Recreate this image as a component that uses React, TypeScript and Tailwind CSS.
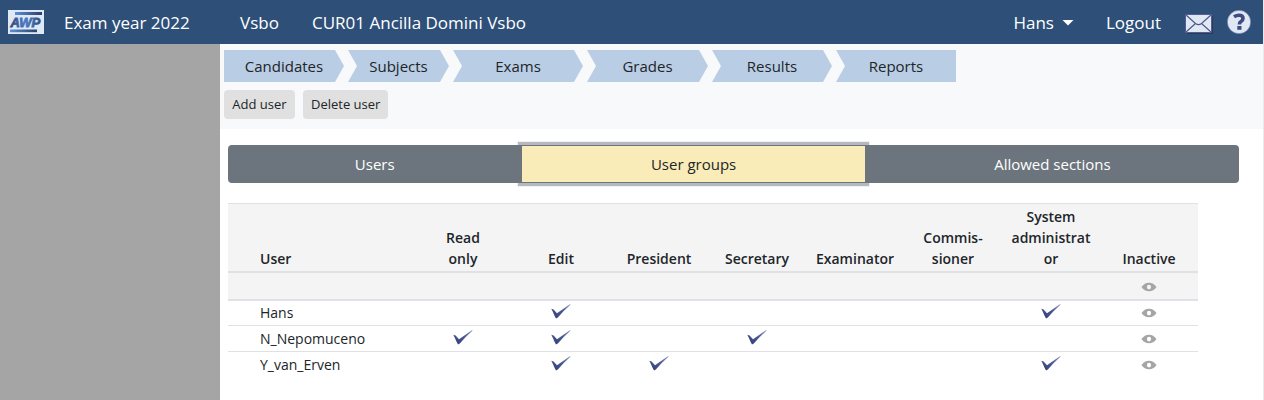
import React from "react";

const steps = [
  { label: "Candidates", size: "w-[120px] [clip-path:polygon(0_0,calc(100%_-_9px)_0,100%_50%,calc(100%_-_9px)_100%,0_100%)]" },
  { label: "Subjects", size: "w-[101px] [clip-path:polygon(0_0,calc(100%_-_9px)_0,100%_50%,calc(100%_-_9px)_100%,0_100%,9px_50%)]" },
  { label: "Exams", size: "w-[130px] [clip-path:polygon(0_0,calc(100%_-_9px)_0,100%_50%,calc(100%_-_9px)_100%,0_100%,9px_50%)]" },
  { label: "Grades", size: "w-[121px] [clip-path:polygon(0_0,calc(100%_-_9px)_0,100%_50%,calc(100%_-_9px)_100%,0_100%,9px_50%)]" },
  { label: "Results", size: "w-[120px] [clip-path:polygon(0_0,calc(100%_-_9px)_0,100%_50%,calc(100%_-_9px)_100%,0_100%,9px_50%)]" },
  { label: "Reports", size: "w-[120px] [clip-path:polygon(0_0,100%_0,100%_100%,0_100%,9px_50%)]" },
];

const groups: { name: string; lines: string[] }[] = [
  { name: "read", lines: ["Read", "only"] },
  { name: "edit", lines: ["Edit"] },
  { name: "president", lines: ["President"] },
  { name: "secretary", lines: ["Secretary"] },
  { name: "examinator", lines: ["Examinator"] },
  { name: "commissioner", lines: ["Commis-", "sioner"] },
  { name: "admin", lines: ["System", "administrat", "or"] },
];

const users = [
  { name: "Hans", member: ["edit", "admin"] },
  { name: "N_Nepomuceno", member: ["read", "edit", "secretary"] },
  { name: "Y_van_Erven", member: ["edit", "president", "admin"] },
];

function Logo() {
  return (
    <svg width="36" height="24" viewBox="0 0 36 24" aria-label="AWP" className="block shrink-0">
      <defs>
        <linearGradient id="bar" x1="0" x2="1">
          <stop offset="0" stopColor="#5b8fd6" />
          <stop offset="1" stopColor="#2b4069" />
        </linearGradient>
        <linearGradient id="letters" x1="0" x2="1">
          <stop offset="0" stopColor="#2c4473" />
          <stop offset="0.500" stopColor="#4a7cc6" />
          <stop offset="1" stopColor="#34507f" />
        </linearGradient>
      </defs>
      <rect width="36" height="24" fill="#dfe8f5" />
      <rect x="7" y="2" width="27" height="3" fill="url(#bar)" />
      <rect x="2" y="19.5" width="27" height="2.7" fill="url(#bar)" />
      <text
        x="2.5"
        y="17"
        fontFamily="Liberation Sans, sans-serif"
        fontSize="13"
        fontWeight="700"
        fontStyle="italic"
        fill="url(#letters)"
        stroke="url(#letters)"
        strokeWidth="0.800"
      >
        AWP
      </text>
    </svg>
  );
}

function MailIcon() {
  return (
    <svg width="28" height="20" viewBox="0 0 28 20" className="block">
      <rect x="2" y="2" width="26" height="18" rx="1" fill="#2b3a55" />
      <rect x="0.5" y="0.5" width="26" height="18" rx="1" fill="#e0e8f4" stroke="#555c96" />
      <path d="M1 1l9.500 8.500q3 2.200 6 0L26 1M1 18l9.500-8.500M26 18l-9.500-8.500" fill="none" stroke="#4c568c" strokeWidth="1.100" />
    </svg>
  );
}

function HelpIcon() {
  return (
    <svg width="24" height="24" viewBox="0 0 24 24" className="block">
      <circle cx="12" cy="12" r="11.700" fill="#e0e8f4" stroke="#6269a5" strokeWidth="0.600" />
      <path d="M7 6.800Q9.500 5.200 12 5.200q4 0 4 3.200 0 1.800-2 3.100-1.600 1-1.600 2.900" fill="none" stroke="#424a85" strokeWidth="3.600" />
      <rect x="10.300" y="16" width="4.200" height="3.800" fill="#424a85" />
    </svg>
  );
}

function Check() {
  return (
    <svg width="20" height="15" viewBox="0 0 20 15" role="img" aria-label="Yes" className="mx-auto mb-0.5 block">
      <defs>
        <linearGradient id="tick" x1="0.300" y1="1" x2="1" y2="0">
          <stop offset="0" stopColor="#34437c" />
          <stop offset="0.500" stopColor="#4c5a96" />
          <stop offset="1" stopColor="#959dc6" />
        </linearGradient>
      </defs>
      <path d="M0.300 4.800L2.600 5.600 6 9.200 18.800 0.300 19.700 0.600 12.500 7.200 6.800 13.600 5 14.600Q3.200 11.500 2 8.300Z" fill="url(#tick)" />
    </svg>
  );
}

function Eye() {
  return (
    <svg width="16" height="10" viewBox="0 0 16 10" className="mx-auto block">
      <path
        fillRule="evenodd"
        d="M0.500 5Q3.500 0.700 8 0.700T15.500 5Q12.500 9.300 8 9.300T0.500 5ZM8 2.800a2.100 2.300 0 1 0 0 4.600a2.100 2.300 0 1 0 0-4.600Z"
        fill="#a5a5a5"
      />
    </svg>
  );
}

function EyeButton({ label }: { label: string }) {
  return (
    <button type="button" aria-label={label} className="mx-auto block">
      <Eye />
    </button>
  );
}

export default function App() {
  return (
    <div className="flex min-h-screen flex-col border-r border-[#e9ecef] bg-white font-['Open_Sans',sans-serif] text-[#212529]">
      <header className="flex h-11 items-center bg-[#2d4f78] pr-3 pl-2 text-[17px] text-white">
        <Logo />
        <nav className="ml-5 flex flex-1 items-center pt-0.5">
          <a href="#year" className="w-44">Exam year 2022</a>
          <a href="#level" className="w-[72px]">Vsbo</a>
          <a href="#school">CUR01 Ancilla Domini Vsbo</a>
        </nav>
        <button type="button" className="flex items-center gap-2 pt-0.5">
          Hans
          <svg width="12" height="6" viewBox="0 0 12 6"><path d="M0.500 0h11L6 5.500z" fill="#fff" /></svg>
        </button>
        <a href="#logout" className="ml-8 pt-0.5">Logout</a>
        <a href="#mail" aria-label="Mail" className="mt-1 ml-6"><MailIcon /></a>
        <a href="#help" aria-label="Help" className="ml-3.5"><HelpIcon /></a>
      </header>

      <div className="flex flex-1">
        <aside className="w-[220px] shrink-0 bg-[#a5a5a5]" />
        <main className="min-w-0 flex-1">
          <section className="bg-[#f8f9fb] px-1 pt-1.5 pb-2.5">
            <nav className="flex gap-1">
              {steps.map((step) => (
                <a
                  key={step.label}
                  href={"#" + step.label.toLowerCase()}
                  className={"flex h-8 items-center justify-center bg-[#b9cde5] text-[15px] " + step.size}
                >
                  {step.label}
                </a>
              ))}
            </nav>
            <div className="mt-2 flex gap-2">
              <button type="button" className="h-[29px] min-w-[71px] rounded bg-[#e0e0e0] px-2 text-[13px]">Add user</button>
              <button type="button" className="h-[29px] min-w-[71px] rounded bg-[#e0e0e0] px-2 text-[13px]">Delete user</button>
            </div>
          </section>

          <div className="pt-4 pr-6 pl-2">
            <div className="flex h-[38px] text-[15px]">
              <button type="button" className="flex-[294] rounded-l bg-[#6c757d] text-white">Users</button>
              <button
                type="button"
                className="relative z-10 flex-[343] border border-[#6c757d] bg-[#faecb8] shadow-[0_0_0_3px_rgba(108,117,125,0.45),0_0_0_4px_rgba(108,117,125,0.1)]"
              >
                User groups
              </button>
              <button type="button" className="flex-[374] rounded-r bg-[#6c757d] text-white">Allowed sections</button>
            </div>

            <table className="mt-5 w-full max-w-[970px] table-fixed border-collapse text-[14px] leading-[21px]">
              <colgroup>
                <col className="w-[186px]" />
                {groups.map((g) => <col key={g.name} />)}
                <col />
              </colgroup>
              <thead className="bg-[#f4f4f4]">
                <tr className="h-[68px] border-t border-b-2 border-[#dee2e6] align-bottom">
                  <th className="pb-0.5 pl-8 text-left font-semibold">User</th>
                  {groups.map((g) => (
                    <th key={g.name} className="pb-0.5 font-semibold">
                      {g.lines.map((line) => <span key={line} className="block">{line}</span>)}
                    </th>
                  ))}
                  <th className="pb-0.5 font-semibold">Inactive</th>
                </tr>
                <tr className="h-[28px] border-b-2 border-[#dee2e6]">
                  <td colSpan={8} />
                  <td className="pt-0.5"><EyeButton label="Filter inactive users" /></td>
                </tr>
              </thead>
              <tbody>
                {users.map((user) => (
                  <tr key={user.name} className="h-[26px] border-b border-[#dee2e6] last:border-b-0">
                    <td className="pl-8">{user.name}</td>
                    {groups.map((g) => (
                      <td key={g.name}>{user.member.includes(g.name) && <Check />}</td>
                    ))}
                    <td><EyeButton label={"Set " + user.name + " inactive"} /></td>
                  </tr>
                ))}
              </tbody>
            </table>
          </div>
        </main>
      </div>
    </div>
  );
}
